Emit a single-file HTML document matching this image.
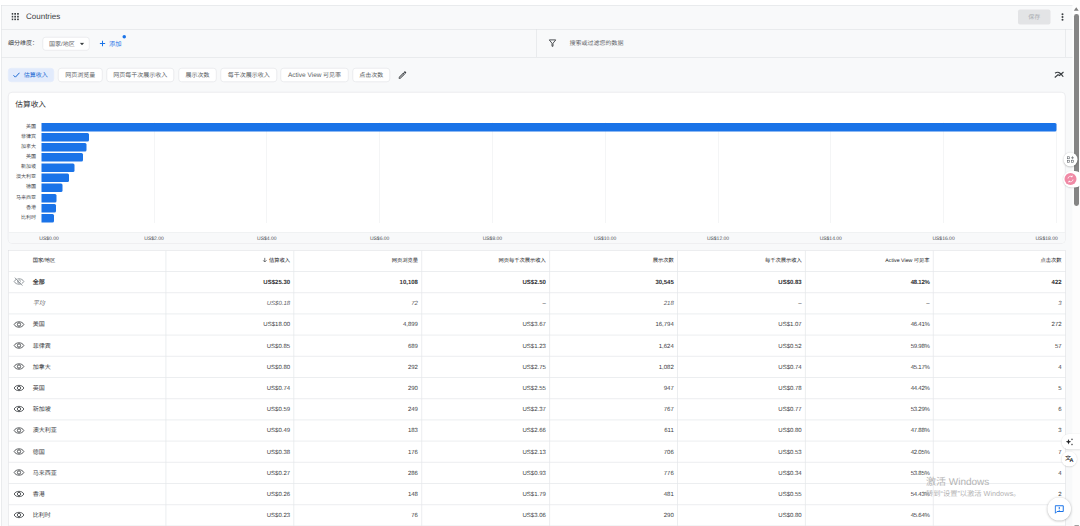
<!DOCTYPE html>
<html lang="zh-CN"><head><meta charset="utf-8"><title>Countries</title>
<style>
html,body{margin:0;padding:0;background:#fff;}
body{width:1080px;height:526px;overflow:hidden;position:relative;font-family:"Liberation Sans",sans-serif;}
#root{position:absolute;left:0;top:0;width:2160px;height:1052px;transform:scale(.5);transform-origin:0 0;text-rendering:geometricPrecision;overflow:hidden;background:#fff;color:#3c4043;}
#root *{box-sizing:border-box;}
.abs{position:absolute;}
#panel{left:2px;top:9.5px;width:2143px;height:1050px;background:#f8f9fa;border-left:1px solid #dadce0;border-top:1px solid #dadce0;}
.hl{position:absolute;height:1px;background:#dadce0;}
.vl{position:absolute;width:1px;background:#dadce0;}
.title{left:52px;top:21px;font-size:16px;line-height:24px;color:#3c4043;}
.chip{position:absolute;top:136px;height:28px;border:1px solid #dadce0;border-radius:6px;background:#fff;font-size:12px;line-height:24px;text-align:center;color:#5a5e63;white-space:nowrap;}
.chip.sel{background:#e2ebfc;border-color:#e2ebfc;color:#1967d2;}
#card{left:16px;top:184px;width:2115px;height:303px;background:#fff;border:1px solid #dadce0;border-radius:8px;overflow:hidden;}
.bar{position:absolute;height:17px;background:#1a73e8;border-radius:0 3px 3px 0;left:66.6px;}
.bl{position:absolute;left:0;width:55px;margin-top:-1px;text-align:right;font-size:10px;line-height:16px;color:#4a4d52;white-space:nowrap;}
.gl{position:absolute;top:60px;height:201px;width:1px;background:#e8eaed;}
.ax{position:absolute;top:283px;font-size:10px;line-height:20px;color:#4a4d52;white-space:nowrap;}
#tbl{left:16px;top:500px;width:2115px;height:600px;background:#fff;border:1px solid #dadce0;}
.cell{position:absolute;font-size:12px;line-height:20px;color:#3c4043;white-space:nowrap;text-align:right;}
.cell.l{text-align:left;color:#3c4043;}
.cell.b{font-weight:bold;color:#303134;}
.cell.i{font-style:italic;color:#5f6368;}
.cell.h{font-size:10.5px;color:#202124;}
.eye{position:absolute;width:22px;height:16px;overflow:visible;}
.fab{position:absolute;border-radius:50%;background:#fff;box-shadow:0 1px 4px rgba(0,0,0,.3);}
</style></head><body><div id="root">
<div id="panel" class="abs"></div>

<div class="hl" style="left:3px;top:58px;width:2142px"></div>
<div class="hl" style="left:3px;top:114px;width:2142px"></div>
<div class="vl" style="left:1073px;top:58px;height:56px"></div>
<div class="vl" style="left:2130px;top:58px;height:56px"></div>
<svg class="abs" style="left:23px;top:26px" width="15" height="15" viewBox="0 0 15 15"><rect x="0" y="0" width="3.4" height="3.4" fill="#3c4043"/><rect x="0" y="5.6" width="3.4" height="3.4" fill="#3c4043"/><rect x="0" y="11.2" width="3.4" height="3.4" fill="#3c4043"/><rect x="5.6" y="0" width="3.4" height="3.4" fill="#3c4043"/><rect x="5.6" y="5.6" width="3.4" height="3.4" fill="#3c4043"/><rect x="5.6" y="11.2" width="3.4" height="3.4" fill="#3c4043"/><rect x="11.2" y="0" width="3.4" height="3.4" fill="#3c4043"/><rect x="11.2" y="5.6" width="3.4" height="3.4" fill="#3c4043"/><rect x="11.2" y="11.2" width="3.4" height="3.4" fill="#3c4043"/></svg>
<div class="abs title">Countries</div>
<div class="abs" style="left:2036px;top:19px;width:65px;height:30px;border-radius:4px;background:#e3e4e6;color:#a8abb0;font-size:12px;line-height:30px;text-align:center">保存</div>
<svg class="abs" style="left:2121px;top:26px" width="8" height="16" viewBox="0 0 8 16"><circle cx="4" cy="2.5" r="2" fill="#3c4043"/><circle cx="4" cy="8" r="2" fill="#3c4043"/><circle cx="4" cy="13.500" r="2" fill="#3c4043"/></svg>
<div class="abs" style="left:16px;top:76px;font-size:12px;line-height:20px;color:#3c4043">细分维度：</div>
<div class="abs" style="left:85px;top:74px;width:94px;height:27px;border:1px solid #dadce0;border-radius:6px;background:#fff;font-size:12px;line-height:25px;color:#5f6368;padding-left:12px">国家/地区</div>
<svg class="abs" style="left:159px;top:85px" width="10" height="6" viewBox="0 0 10 6"><path d="M0.500 0.500h9L5 5.500z" fill="#3c4043"/></svg>
<svg class="abs" style="left:199px;top:80px" width="12" height="14" viewBox="0 0 12 14"><path d="M6 1.500v11M0.500 7h11" stroke="#1a73e8" stroke-width="2" fill="none"/></svg>
<div class="abs" style="left:218px;top:77px;font-size:12.5px;line-height:20px;color:#1a73e8">添加</div>
<div class="abs" style="left:245px;top:70px;width:7px;height:7px;border-radius:50%;background:#1a73e8"></div>
<svg class="abs" style="left:1097px;top:78px" width="16" height="16" viewBox="0 0 16 16"><path d="M1.500 1.800h13L9 8.500v6H7v-6z" fill="none" stroke="#3c4043" stroke-width="1.800" stroke-linejoin="round"/></svg>
<div class="abs" style="left:1139px;top:76px;font-size:12px;line-height:20px;color:#5f6368">搜索或过滤您的数据</div>
<div class="chip sel" style="left:16.4px;width:92px;padding-left:18px">估算收入</div>
<svg class="abs" style="left:26.4px;top:144px" width="14" height="12" viewBox="0 0 14 12"><path d="M1 6.500l3.800 3.800L13 1.500" fill="none" stroke="#1967d2" stroke-width="2"/></svg>
<div class="chip" style="left:116px;width:88.6px">网页浏览量</div>
<div class="chip" style="left:212.6px;width:135.8px">网页每千次展示收入</div>
<div class="chip" style="left:357.4px;width:75.2px">展示次数</div>
<div class="chip" style="left:440.6px;width:113.4px">每千次展示收入</div>
<div class="chip" style="left:561.2px;width:135.8px"><span style="font-size:13px">Active View</span> 可见率</div>
<div class="chip" style="left:704.6px;width:75.6px">点击次数</div>
<svg class="abs" style="left:795px;top:140px" width="20" height="20" viewBox="0 0 24 24"><path fill="#3c4043" d="M14.060 9.020l.920.920L5.920 19H5v-.920l9.060-9.060M17.660 3c-.250 0-.510.100-.700.290l-1.830 1.830 3.750 3.750 1.830-1.830c.390-.390.390-1.020 0-1.410l-2.340-2.340c-.200-.200-.450-.290-.710-.290zm-3.600 3.190L3 17.250V21h3.750L17.810 9.940l-3.750-3.750z"/></svg>
<svg class="abs" style="left:2108px;top:142px" width="20" height="15" viewBox="0 0 20 15"><path d="M2 4.500Q10 -1.500 18.500 11.500" fill="none" stroke="#3c4043" stroke-width="2.200"/><path d="M1.500 13L8 7.500l3 1.500L19 2" stroke="#3c4043" stroke-width="2.200" fill="none"/></svg>
<div id="card" class="abs">
<div class="abs" style="left:13.5px;top:13px;font-size:15.4px;line-height:24px;color:#303134">估算收入</div>
<div class="gl" style="left:290.7px"></div>
<div class="gl" style="left:516.2px"></div>
<div class="gl" style="left:741.8px"></div>
<div class="gl" style="left:967.3px"></div>
<div class="gl" style="left:1192.9px"></div>
<div class="gl" style="left:1418.5px"></div>
<div class="gl" style="left:1644.0px"></div>
<div class="gl" style="left:1869.6px"></div>
<div class="gl" style="left:2095.1px"></div>
<div class="bl" style="top:60.6px">美国</div><div class="bar" style="top:60.6px;width:2030.0px;left:65.6px"></div>
<div class="bl" style="top:80.9px">菲律宾</div><div class="bar" style="top:80.9px;width:95.9px;left:65.6px"></div>
<div class="bl" style="top:101.2px">加拿大</div><div class="bar" style="top:101.2px;width:90.2px;left:65.6px"></div>
<div class="bl" style="top:121.4px">英国</div><div class="bar" style="top:121.4px;width:83.5px;left:65.6px"></div>
<div class="bl" style="top:141.7px">新加坡</div><div class="bar" style="top:141.7px;width:66.5px;left:65.6px"></div>
<div class="bl" style="top:162.0px">澳大利亚</div><div class="bar" style="top:162.0px;width:55.3px;left:65.6px"></div>
<div class="bl" style="top:182.3px">德国</div><div class="bar" style="top:182.3px;width:42.9px;left:65.6px"></div>
<div class="bl" style="top:202.6px">马来西亚</div><div class="bar" style="top:202.6px;width:30.5px;left:65.6px"></div>
<div class="bl" style="top:222.8px">香港</div><div class="bar" style="top:222.8px;width:29.3px;left:65.6px"></div>
<div class="bl" style="top:243.1px">比利时</div><div class="bar" style="top:243.1px;width:25.9px;left:65.6px"></div>
<div class="abs" style="left:0;top:279px;width:2115px;height:24px;background:#f8f9fa;border-top:1px solid #e8eaed"></div>
<div class="ax" style="left:61.6px">US$0.00</div>
<div class="ax" style="left:241.2px;width:100px;text-align:center">US$2.00</div>
<div class="ax" style="left:466.7px;width:100px;text-align:center">US$4.00</div>
<div class="ax" style="left:692.3px;width:100px;text-align:center">US$6.00</div>
<div class="ax" style="left:917.8px;width:100px;text-align:center">US$8.00</div>
<div class="ax" style="left:1143.4px;width:100px;text-align:center">US$10.00</div>
<div class="ax" style="left:1369.0px;width:100px;text-align:center">US$12.00</div>
<div class="ax" style="left:1594.5px;width:100px;text-align:center">US$14.00</div>
<div class="ax" style="left:1820.1px;width:100px;text-align:center">US$16.00</div>
<div class="ax" style="right:14.6px">US$18.00</div>
</div>
<div id="tbl" class="abs">
<svg class="abs" style="left:0;top:0" width="2115" height="600" viewBox="0 0 2115 600"><path d="M314.8 0V600M570.6 0V600M826.4 0V600M1082.2 0V600M1338.0 0V600M1593.8 0V600M1849.6 0V600M0 42.0H2115M0 84.4H2115M0 126.8H2115M0 169.2H2115M0 211.6H2115M0 254.0H2115M0 296.4H2115M0 338.8H2115M0 381.2H2115M0 423.6H2115M0 466.0H2115M0 508.4H2115M0 550.8H2115M0 593.2H2115" fill="none" stroke="#e4e6ea" stroke-width="1.400"/></svg>
<div class="cell l h" style="left:48.4px;top:10.3px">国家/地区</div>
<div class="cell h" style="right:1549.9px;top:10.3px"><svg width="9" height="10" viewBox="0 0 9 10" style="margin-right:4px;vertical-align:-1px"><path d="M4.500 0.500v8M1 5.500l3.500 3.500L8 5.500" fill="none" stroke="#3c4043" stroke-width="1.400"/></svg>估算收入</div>
<div class="cell h" style="right:1294.1px;top:10.3px">网页浏览量</div>
<div class="cell h" style="right:1038.3px;top:10.3px">网页每千次展示收入</div>
<div class="cell h" style="right:782.5px;top:10.3px">展示次数</div>
<div class="cell h" style="right:526.7px;top:10.3px">每千次展示收入</div>
<div class="cell h" style="right:270.9px;top:10.3px">Active View 可见率</div>
<div class="cell h" style="right:6.9px;top:10.3px">点击次数</div>
<svg class="eye" style="left:10px;top:53.9px" viewBox="0 0 22 16"><path d="M1.300 8C3.500 4 7 2.700 11 2.700s7.500 1.300 9.700 5.300c-2.200 4-5.700 5.300-9.700 5.300S3.500 12 1.300 8z" fill="none" stroke="#8d9399" stroke-width="1.900"/><circle cx="11" cy="8" r="3" fill="none" stroke="#8d9399" stroke-width="1.800"/><path d="M4.400 -.6L19.400 15.200" stroke="#fff" stroke-width="1.600"/><path d="M2.800 .4L17.800 16.200" stroke="#8d9399" stroke-width="1.900"/></svg>
<div class="cell l b" style="left:48.4px;top:52.5px">全部</div>
<div class="cell b" style="right:1549.9px;top:52.5px">US$25.30</div>
<div class="cell b" style="right:1294.1px;top:52.5px">10,108</div>
<div class="cell b" style="right:1038.3px;top:52.5px">US$2.50</div>
<div class="cell b" style="right:782.5px;top:52.5px">30,545</div>
<div class="cell b" style="right:526.7px;top:52.5px">US$0.83</div>
<div class="cell b" style="right:270.9px;top:52.5px;letter-spacing:-.5px">48.12%</div>
<div class="cell b" style="right:6.9px;top:52.5px">422</div>
<div class="cell l i" style="left:48.4px;top:94.9px">平均</div>
<div class="cell i" style="right:1549.9px;top:94.9px">US$0.18</div>
<div class="cell i" style="right:1294.1px;top:94.9px">72</div>
<div class="cell i" style="right:1038.3px;top:94.9px">–</div>
<div class="cell i" style="right:782.5px;top:94.9px">218</div>
<div class="cell i" style="right:526.7px;top:94.9px">–</div>
<div class="cell i" style="right:270.9px;top:94.9px">–</div>
<div class="cell i" style="right:6.9px;top:94.9px">3</div>
<svg class="eye" style="left:10px;top:139.5px" viewBox="0 0 22 16"><path d="M1.300 8C3.500 4 7 2.700 11 2.700s7.500 1.300 9.700 5.300c-2.200 4-5.700 5.300-9.700 5.300S3.500 12 1.300 8z" fill="none" stroke="#3c4043" stroke-width="1.700"/><circle cx="11" cy="8" r="3.300" fill="none" stroke="#3c4043" stroke-width="1.700"/></svg>
<div class="cell l" style="left:48.4px;top:137.3px">美国</div>
<div class="cell" style="right:1549.9px;top:137.3px">US$18.00</div>
<div class="cell" style="right:1294.1px;top:137.3px">4,899</div>
<div class="cell" style="right:1038.3px;top:137.3px">US$3.67</div>
<div class="cell" style="right:782.5px;top:137.3px">16,794</div>
<div class="cell" style="right:526.7px;top:137.3px">US$1.07</div>
<div class="cell" style="right:270.9px;top:137.3px;letter-spacing:-.5px">46.41%</div>
<div class="cell" style="right:6.9px;top:137.3px">272</div>
<svg class="eye" style="left:10px;top:181.9px" viewBox="0 0 22 16"><path d="M1.300 8C3.500 4 7 2.700 11 2.700s7.500 1.300 9.700 5.300c-2.200 4-5.700 5.300-9.700 5.300S3.500 12 1.300 8z" fill="none" stroke="#3c4043" stroke-width="1.700"/><circle cx="11" cy="8" r="3.300" fill="none" stroke="#3c4043" stroke-width="1.700"/></svg>
<div class="cell l" style="left:48.4px;top:179.7px">菲律宾</div>
<div class="cell" style="right:1549.9px;top:179.7px">US$0.85</div>
<div class="cell" style="right:1294.1px;top:179.7px">689</div>
<div class="cell" style="right:1038.3px;top:179.7px">US$1.23</div>
<div class="cell" style="right:782.5px;top:179.7px">1,624</div>
<div class="cell" style="right:526.7px;top:179.7px">US$0.52</div>
<div class="cell" style="right:270.9px;top:179.7px;letter-spacing:-.5px">59.98%</div>
<div class="cell" style="right:6.9px;top:179.7px">57</div>
<svg class="eye" style="left:10px;top:224.3px" viewBox="0 0 22 16"><path d="M1.300 8C3.500 4 7 2.700 11 2.700s7.500 1.300 9.700 5.300c-2.200 4-5.700 5.300-9.700 5.300S3.500 12 1.300 8z" fill="none" stroke="#3c4043" stroke-width="1.700"/><circle cx="11" cy="8" r="3.300" fill="none" stroke="#3c4043" stroke-width="1.700"/></svg>
<div class="cell l" style="left:48.4px;top:222.1px">加拿大</div>
<div class="cell" style="right:1549.9px;top:222.1px">US$0.80</div>
<div class="cell" style="right:1294.1px;top:222.1px">292</div>
<div class="cell" style="right:1038.3px;top:222.1px">US$2.75</div>
<div class="cell" style="right:782.5px;top:222.1px">1,082</div>
<div class="cell" style="right:526.7px;top:222.1px">US$0.74</div>
<div class="cell" style="right:270.9px;top:222.1px;letter-spacing:-.5px">45.17%</div>
<div class="cell" style="right:6.9px;top:222.1px">4</div>
<svg class="eye" style="left:10px;top:266.7px" viewBox="0 0 22 16"><path d="M1.300 8C3.500 4 7 2.700 11 2.700s7.500 1.300 9.700 5.300c-2.200 4-5.700 5.300-9.700 5.300S3.500 12 1.300 8z" fill="none" stroke="#3c4043" stroke-width="1.700"/><circle cx="11" cy="8" r="3.300" fill="none" stroke="#3c4043" stroke-width="1.700"/></svg>
<div class="cell l" style="left:48.4px;top:264.5px">英国</div>
<div class="cell" style="right:1549.9px;top:264.5px">US$0.74</div>
<div class="cell" style="right:1294.1px;top:264.5px">290</div>
<div class="cell" style="right:1038.3px;top:264.5px">US$2.55</div>
<div class="cell" style="right:782.5px;top:264.5px">947</div>
<div class="cell" style="right:526.7px;top:264.5px">US$0.78</div>
<div class="cell" style="right:270.9px;top:264.5px;letter-spacing:-.5px">44.42%</div>
<div class="cell" style="right:6.9px;top:264.5px">5</div>
<svg class="eye" style="left:10px;top:309.1px" viewBox="0 0 22 16"><path d="M1.300 8C3.500 4 7 2.700 11 2.700s7.500 1.300 9.700 5.300c-2.200 4-5.700 5.300-9.700 5.300S3.500 12 1.300 8z" fill="none" stroke="#3c4043" stroke-width="1.700"/><circle cx="11" cy="8" r="3.300" fill="none" stroke="#3c4043" stroke-width="1.700"/></svg>
<div class="cell l" style="left:48.4px;top:306.9px">新加坡</div>
<div class="cell" style="right:1549.9px;top:306.9px">US$0.59</div>
<div class="cell" style="right:1294.1px;top:306.9px">249</div>
<div class="cell" style="right:1038.3px;top:306.9px">US$2.37</div>
<div class="cell" style="right:782.5px;top:306.9px">767</div>
<div class="cell" style="right:526.7px;top:306.9px">US$0.77</div>
<div class="cell" style="right:270.9px;top:306.9px;letter-spacing:-.5px">53.29%</div>
<div class="cell" style="right:6.9px;top:306.9px">6</div>
<svg class="eye" style="left:10px;top:351.5px" viewBox="0 0 22 16"><path d="M1.300 8C3.500 4 7 2.700 11 2.700s7.500 1.300 9.700 5.300c-2.200 4-5.700 5.300-9.700 5.300S3.500 12 1.300 8z" fill="none" stroke="#3c4043" stroke-width="1.700"/><circle cx="11" cy="8" r="3.300" fill="none" stroke="#3c4043" stroke-width="1.700"/></svg>
<div class="cell l" style="left:48.4px;top:349.3px">澳大利亚</div>
<div class="cell" style="right:1549.9px;top:349.3px">US$0.49</div>
<div class="cell" style="right:1294.1px;top:349.3px">183</div>
<div class="cell" style="right:1038.3px;top:349.3px">US$2.66</div>
<div class="cell" style="right:782.5px;top:349.3px">611</div>
<div class="cell" style="right:526.7px;top:349.3px">US$0.80</div>
<div class="cell" style="right:270.9px;top:349.3px;letter-spacing:-.5px">47.88%</div>
<div class="cell" style="right:6.9px;top:349.3px">3</div>
<svg class="eye" style="left:10px;top:393.9px" viewBox="0 0 22 16"><path d="M1.300 8C3.500 4 7 2.700 11 2.700s7.500 1.300 9.700 5.300c-2.200 4-5.700 5.300-9.700 5.300S3.500 12 1.300 8z" fill="none" stroke="#3c4043" stroke-width="1.700"/><circle cx="11" cy="8" r="3.300" fill="none" stroke="#3c4043" stroke-width="1.700"/></svg>
<div class="cell l" style="left:48.4px;top:391.7px">德国</div>
<div class="cell" style="right:1549.9px;top:391.7px">US$0.38</div>
<div class="cell" style="right:1294.1px;top:391.7px">176</div>
<div class="cell" style="right:1038.3px;top:391.7px">US$2.13</div>
<div class="cell" style="right:782.5px;top:391.7px">706</div>
<div class="cell" style="right:526.7px;top:391.7px">US$0.53</div>
<div class="cell" style="right:270.9px;top:391.7px;letter-spacing:-.5px">42.05%</div>
<div class="cell" style="right:6.9px;top:391.7px">7</div>
<svg class="eye" style="left:10px;top:436.3px" viewBox="0 0 22 16"><path d="M1.300 8C3.500 4 7 2.700 11 2.700s7.500 1.300 9.700 5.300c-2.200 4-5.700 5.300-9.700 5.300S3.500 12 1.300 8z" fill="none" stroke="#3c4043" stroke-width="1.700"/><circle cx="11" cy="8" r="3.300" fill="none" stroke="#3c4043" stroke-width="1.700"/></svg>
<div class="cell l" style="left:48.4px;top:434.1px">马来西亚</div>
<div class="cell" style="right:1549.9px;top:434.1px">US$0.27</div>
<div class="cell" style="right:1294.1px;top:434.1px">286</div>
<div class="cell" style="right:1038.3px;top:434.1px">US$0.93</div>
<div class="cell" style="right:782.5px;top:434.1px">776</div>
<div class="cell" style="right:526.7px;top:434.1px">US$0.34</div>
<div class="cell" style="right:270.9px;top:434.1px;letter-spacing:-.5px">53.85%</div>
<div class="cell" style="right:6.9px;top:434.1px">4</div>
<svg class="eye" style="left:10px;top:478.7px" viewBox="0 0 22 16"><path d="M1.300 8C3.500 4 7 2.700 11 2.700s7.500 1.300 9.700 5.300c-2.200 4-5.700 5.300-9.700 5.300S3.500 12 1.300 8z" fill="none" stroke="#3c4043" stroke-width="1.700"/><circle cx="11" cy="8" r="3.300" fill="none" stroke="#3c4043" stroke-width="1.700"/></svg>
<div class="cell l" style="left:48.4px;top:476.5px">香港</div>
<div class="cell" style="right:1549.9px;top:476.5px">US$0.26</div>
<div class="cell" style="right:1294.1px;top:476.5px">148</div>
<div class="cell" style="right:1038.3px;top:476.5px">US$1.79</div>
<div class="cell" style="right:782.5px;top:476.5px">481</div>
<div class="cell" style="right:526.7px;top:476.5px">US$0.55</div>
<div class="cell" style="right:270.9px;top:476.5px;letter-spacing:-.5px">54.43%</div>
<div class="cell" style="right:6.9px;top:476.5px">2</div>
<svg class="eye" style="left:10px;top:521.1px" viewBox="0 0 22 16"><path d="M1.300 8C3.500 4 7 2.700 11 2.700s7.500 1.300 9.700 5.300c-2.200 4-5.700 5.300-9.700 5.300S3.500 12 1.300 8z" fill="none" stroke="#3c4043" stroke-width="1.700"/><circle cx="11" cy="8" r="3.300" fill="none" stroke="#3c4043" stroke-width="1.700"/></svg>
<div class="cell l" style="left:48.4px;top:518.9px">比利时</div>
<div class="cell" style="right:1549.9px;top:518.9px">US$0.23</div>
<div class="cell" style="right:1294.1px;top:518.9px">76</div>
<div class="cell" style="right:1038.3px;top:518.9px">US$3.06</div>
<div class="cell" style="right:782.5px;top:518.9px">290</div>
<div class="cell" style="right:526.7px;top:518.9px">US$0.80</div>
<div class="cell" style="right:270.9px;top:518.9px;letter-spacing:-.5px">45.64%</div>
<div class="cell" style="right:6.9px;top:518.9px"></div>
</div>
<div class="abs" style="left:2146px;top:0;width:14px;height:1052px;background:#fdfdfd"></div>
<svg class="abs" style="left:2147px;top:14px" width="11" height="8" viewBox="0 0 11 8"><path d="M5.500 0.500L10.500 7.500H0.500z" fill="#808080"/></svg>
<div class="abs" style="left:2148px;top:28px;width:9.600px;height:384px;border-radius:4.800px;background:#858585"></div>
<svg class="abs" style="left:2148px;top:1050px" width="11" height="8" viewBox="0 0 11 8"><path d="M5.500 7.500L10.500 0.500H0.500z" fill="#808080"/></svg>
<div class="fab" style="left:2127px;top:305px;width:28px;height:28px"></div>
<svg class="abs" style="left:2134px;top:312px" width="15" height="14" viewBox="0 0 15 14"><g fill="none" stroke="#5f6368" stroke-width="1.200"><rect x="1" y="1.500" width="4" height="4"/><rect x="1" y="8.500" width="4" height="4"/><rect x="9" y="8.500" width="4" height="4"/><path d="M11 0.500v6M8 3.500h6"/></g></svg>
<div class="abs" style="left:2126px;top:342px;width:40px;height:32.600px;border-radius:16.300px;background:#fff;box-shadow:0 1px 3px rgba(0,0,0,.2)"></div>
<div class="abs" style="left:2129px;top:346px;width:24.400px;height:24.400px;border-radius:50%;background:#f08aa6"></div>
<svg class="abs" style="left:2133px;top:350px" width="16" height="16" viewBox="0 0 16 16"><g fill="none" stroke="#fff" stroke-width="1.600"><path d="M3 7a5 5 0 0 1 8-3.500M13 9a5 5 0 0 1-8 3.500"/><path d="M9 3.500h2.500V1M7 12.500H4.500V15"/></g></svg>
<div class="abs" style="left:2123.400px;top:868.400px;width:50px;height:30.800px;border-radius:15.400px;background:#fff;box-shadow:0 1px 3px rgba(0,0,0,.2)"></div>
<svg class="abs" style="left:2131px;top:876px" width="16" height="16" viewBox="0 0 16 16"><path fill="#202124" d="M6 2l1.500 4L11.500 7.500 7.500 9 6 13 4.500 9 .5 7.500 4.500 6zM13 0l.7 1.800 1.800.7-1.800.7L13 5l-.7-1.800-1.800-.7 1.800-.7zM13 10.500l.7 1.800 1.800.7-1.800.7-.7 1.800-.7-1.800-1.800-.7 1.800-.7z"/></svg>
<div class="fab" style="left:2123.400px;top:902.600px;width:30.800px;height:30.800px;box-shadow:0 1px 3px rgba(0,0,0,.2)"></div>
<div class="abs" style="left:2130px;top:909px;font-size:12px;line-height:14px;color:#202124;white-space:nowrap;letter-spacing:-3px">文<span style="font-size:11px;font-weight:bold;position:relative;top:3px">A</span></div>
<div class="fab" style="left:2095px;top:994.600px;width:46.600px;height:46.600px;box-shadow:0 1px 5px rgba(0,0,0,.3)"></div>
<svg class="abs" style="left:2109px;top:1010px" width="19" height="18" viewBox="0 0 19 18"><path fill="none" stroke="#1a73e8" stroke-width="2" d="M1.500 1.500h16v11.500H5L1.500 16.500z"/><path d="M9.500 4v4M9.500 9.500v2" stroke="#1a73e8" stroke-width="2"/></svg>
<div class="abs" style="left:1852px;top:950px;font-size:20px;line-height:26px;color:#b4b4b4;white-space:nowrap">激活 Windows</div>
<div class="abs" style="left:1852px;top:977px;font-size:14.500px;line-height:20px;color:#b4b4b4;white-space:nowrap">转到“设置”以激活 Windows。</div>
</div></body></html>
